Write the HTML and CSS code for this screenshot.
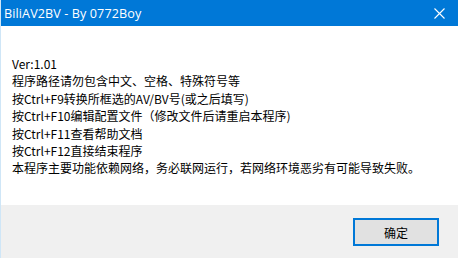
FILE: index.html
```html
<!DOCTYPE html>
<html lang="zh-CN">
<head>
    <meta charset="UTF-8">
    <title>BiliAV2BV - By 0772Boy</title>
    <link rel="stylesheet" href="styles.css">
</head>
<body>
    <div class="window">
        <div class="titlebar">
            <span class="title">BiliAV2BV - By 0772Boy</span>
            <button class="close-btn" aria-label="关闭">
                <svg width="11" height="11" viewBox="0 0 11 11">
                    <path d="M0.5 0.5 L10.5 10.5 M10.5 0.5 L0.5 10.5" stroke="#fff" stroke-width="1.1" fill="none"/>
                </svg>
            </button>
        </div>
        <div class="content">
            <p class="line">Ver:1.01</p>
            <p class="line">程序路径请勿包含中文、空格、特殊符号等</p>
            <p class="line">按Ctrl+F9转换所框选的AV/BV号(或之后填写)</p>
            <p class="line">按Ctrl+F10编辑配置文件（修改文件后请重启本程序)</p>
            <p class="line">按Ctrl+F11查看帮助文档</p>
            <p class="line">按Ctrl+F12直接结束程序</p>
            <p class="line">本程序主要功能依赖网络，务必联网运行，若网络环境恶劣有可能导致失败。</p>
        </div>
        <div class="footer">
            <button class="ok-btn">确定</button>
        </div>
    </div>
</body>
</html>
```

FILE: styles.css
```css
body, html {
    margin: 0;
    padding: 0;
    width: 458px;
    height: 258px;
    overflow: hidden;
    font-family: "Noto Sans CJK SC", "Noto Sans", sans-serif;
}
.window {
    display: flex;
    flex-direction: column;
    height: 258px;
    background: #fff;
    border-left: 1px solid #cfe6f7;
    box-sizing: border-box;
}
.titlebar {
    height: 26px;
    background: #0078d7;
    color: #fff;
    display: flex;
    align-items: center;
    justify-content: space-between;
    padding-left: 3px;
}
.title {
    font-family: "Open Sans", "Noto Sans", sans-serif;
    font-size: 12.6px;
    letter-spacing: 0.1px;
}
.close-btn {
    width: 34px;
    height: 26px;
    border: none;
    background: transparent;
    padding: 0;
    margin-right: 2px;
    display: flex;
    align-items: center;
    justify-content: center;
}
.content {
    flex: 1;
    padding: 29px 0 0 11px;
    color: #000;
}
.line {
    margin: 0;
    font-size: 12px;
    line-height: 17.4px;
    white-space: nowrap;
}
.footer {
    height: 53px;
    background: #f0f0f0;
    display: flex;
    justify-content: flex-end;
    align-items: flex-start;
    padding: 13px 19px 0 0;
    box-sizing: border-box;
}
.ok-btn {
    width: 86px;
    height: 28px;
    background: #e1e1e1;
    border: 2px solid #0078d7;
    font-family: "Noto Sans CJK SC", sans-serif;
    font-size: 12px;
    color: #000;
    padding: 0;
}
```
